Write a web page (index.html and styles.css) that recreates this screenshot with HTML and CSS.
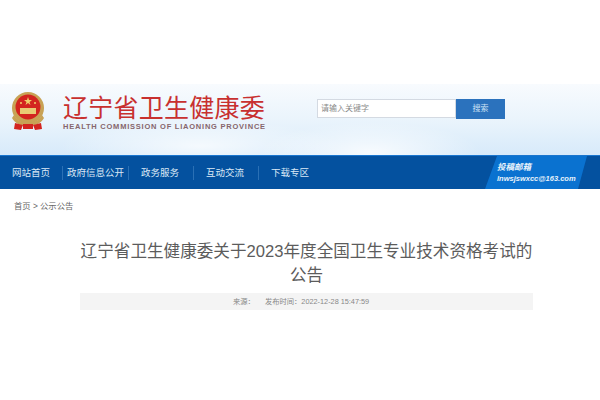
FILE: index.html
```html
<!DOCTYPE html>
<html lang="zh-CN">
<head>
    <meta charset="UTF-8">
    <title>辽宁省卫生健康委</title>
    <link rel="stylesheet" href="styles.css">
</head>
<body>
    <header class="header">
        <svg class="emblem" width="36" height="39" viewBox="0 0 36 39">
            <circle cx="18" cy="16" r="16" fill="#c8a255"/>
            <circle cx="18" cy="15" r="12.500" fill="#d3241f"/>
            <path d="M18 5l1 3h3l-2.500 2 1 3-2.500-2-2.500 2 1-3-2.500-2h3z" fill="#f0cf6a"/>
            <circle cx="11" cy="11" r="1" fill="#f0cf6a"/>
            <circle cx="25" cy="11" r="1" fill="#f0cf6a"/>
            <rect x="10" y="16" width="16" height="6" fill="#e9cb74"/>
            <path d="M4 23c3 6 9 8 14 8s11-2 14-8l2 3c-3 6-10 8-16 8S5 32 2 26z" fill="#c8a255"/>
            <path d="M5 31l8 2-2 5-7-1zM31 31l-8 2 2 5 7-1z" fill="#d3241f"/>
            <rect x="13" y="32" width="10" height="5" fill="#d3241f"/>
        </svg>
        <div class="brand">
            <div class="brand-name">辽宁省卫生健康委</div>
            <div class="brand-en">HEALTH COMMISSION OF LIAONING PROVINCE</div>
        </div>
        <form class="search">
            <div class="search-input">请输入关键字</div>
            <div class="search-btn">搜索</div>
        </form>
    </header>

    <nav class="nav">
        <a class="nav-item home">网站首页</a>
        <a class="nav-item gov">政府信息公开</a>
        <a class="nav-item serve">政务服务</a>
        <a class="nav-item talk">互动交流</a>
        <a class="nav-item down">下载专区</a>
        <div class="mail">
            <div class="mail-title">投稿邮箱</div>
            <div class="mail-addr">lnwsjswxcc@163.com</div>
        </div>
    </nav>

    <div class="crumbs">首页 &gt; 公示公告</div>

    <main class="article">
        <h1>辽宁省卫生健康委关于2023年度全国卫生专业技术资格考试的公告</h1>
        <div class="meta">
            <span>来源：</span>
            <span>发布时间：2022-12-28 15:47:59</span>
        </div>
    </main>
</body>
</html>
```

FILE: styles.css
```css
* {
    box-sizing: border-box;
}
body {
    margin: 0;
    background: #fff;
    font-family: "Liberation Sans", "Noto Sans CJK SC", sans-serif;
    overflow: hidden;
}
.header {
    margin-top: 84px;
    height: 71px;
    display: flex;
    align-items: flex-start;
    padding: 8px 0 0 10px;
    background:
        radial-gradient(ellipse 110px 30px at 370px 68px, rgba(255, 255, 255, 0.8), transparent),
        radial-gradient(ellipse 140px 26px at 200px 62px, rgba(255, 255, 255, 0.7), transparent),
        linear-gradient(to bottom, #f8fbfe, #eaf4fc 50%, #d7eafa);
}
.emblem {
    flex: none;
}
.brand {
    margin-left: 17px;
    width: 236px;
    padding-top: 2px;
}
.brand-name {
    font-size: 25px;
    line-height: 28px;
    letter-spacing: 0.25px;
    color: #c8302f;
    white-space: nowrap;
}
.brand-en {
    font-size: 7.500px;
    line-height: 10px;
    letter-spacing: 0.77px;
    font-weight: bold;
    color: #86666c;
    white-space: nowrap;
}
.search {
    margin: 7px 0 0 18px;
    display: flex;
}
.search-input {
    width: 139px;
    height: 19px;
    background: #fff;
    border: 1px solid #d4dae2;
    font-size: 8px;
    line-height: 17px;
    padding-left: 3px;
    color: #8a8a8a;
}
.search-btn {
    width: 49px;
    height: 20px;
    background: #2b72bd;
    color: #cfe2f5;
    font-size: 8px;
    line-height: 20px;
    text-align: center;
}
.nav {
    height: 34px;
    display: flex;
    align-items: center;
    background: #04519f;
    border-top: 1px solid #1a76cf;
    font-size: 9.500px;
    color: #dce9f6;
}
.nav-item {
    display: block;
    height: 14px;
    line-height: 14px;
    padding-left: 12px;
    border-left: 1px solid #2a70b5;
    white-space: nowrap;
}
.home {
    margin-left: 12px;
    width: 50px;
    padding-left: 0;
    border-left: 0;
}
.gov {
    width: 66px;
    padding-left: 4px;
}
.serve {
    width: 65px;
}
.talk {
    width: 65px;
}
.down {
    width: 227px;
}
.mail {
    width: 102px;
    height: 33px;
    flex: none;
    padding: 6px 0 0 12px;
    background: #0a72d0;
    clip-path: polygon(12px 0, 100% 0, 93px 100%, 0 100%);
    font-style: italic;
    font-weight: bold;
    color: #e8f2fb;
}
.mail-title {
    font-size: 8.500px;
    line-height: 11px;
}
.mail-addr {
    font-size: 7.500px;
    line-height: 11px;
    white-space: nowrap;
}
.crumbs {
    margin: 12px 0 0 14px;
    font-size: 8.300px;
    line-height: 11px;
    color: #666;
}
.article {
    width: 453px;
    margin: 28px 0 0 80px;
}
.article h1 {
    margin: 0;
    font-size: 16.600px;
    font-weight: normal;
    line-height: 24px;
    color: #5c5c5c;
    text-align: center;
}
.meta {
    margin-top: 5px;
    height: 17px;
    background: #f4f4f4;
    display: flex;
    gap: 10px;
    padding-left: 153px;
    font-size: 7.300px;
    line-height: 17px;
    color: #888;
}
```
